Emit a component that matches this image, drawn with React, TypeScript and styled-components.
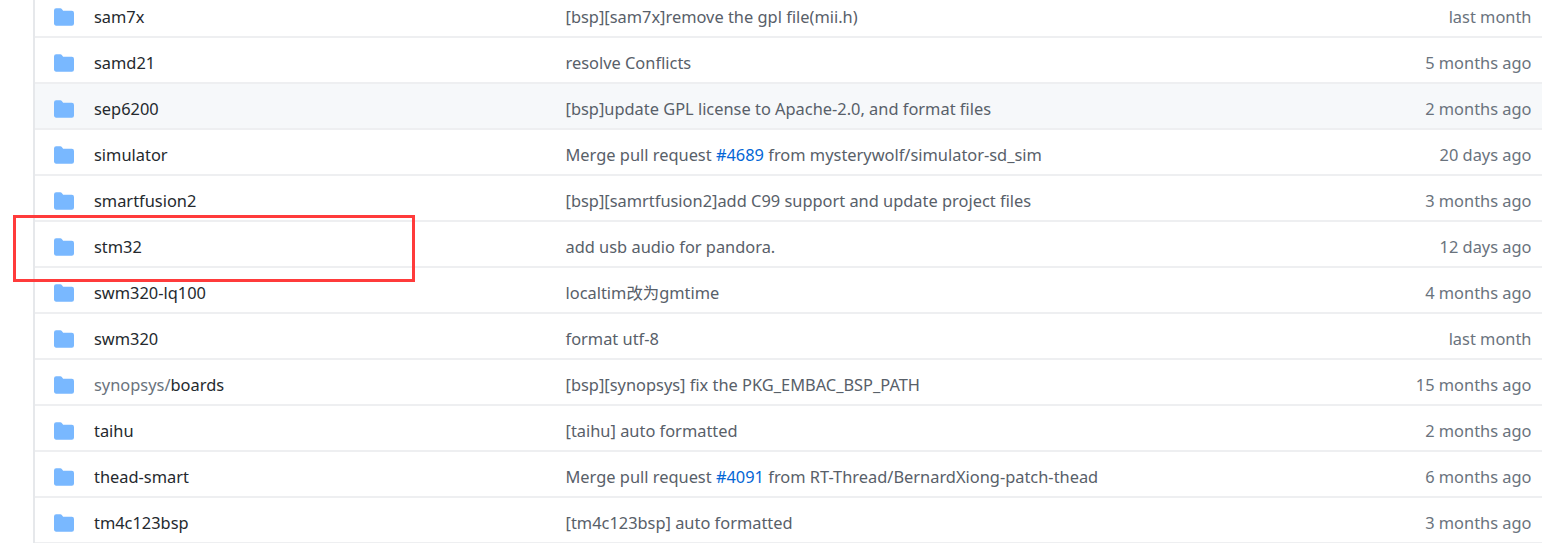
import styled, { createGlobalStyle } from 'styled-components';

interface FileRow {
  name: string;
  prefix?: string;
  message: string;
  issue?: string;
  messageEnd?: string;
  age: string;
  hovered?: boolean;
}

const rows: FileRow[] = [
  { name: 'sam7x', message: '[bsp][sam7x]remove the gpl file(mii.h)', age: 'last month' },
  { name: 'samd21', message: 'resolve Conflicts', age: '5 months ago' },
  { name: 'sep6200', message: '[bsp]update GPL license to Apache-2.0, and format files', age: '2 months ago', hovered: true },
  { name: 'simulator', message: 'Merge pull request ', issue: '#4689', messageEnd: ' from mysterywolf/simulator-sd_sim', age: '20 days ago' },
  { name: 'smartfusion2', message: '[bsp][samrtfusion2]add C99 support and update project files', age: '3 months ago' },
  { name: 'stm32', message: 'add usb audio for pandora.', age: '12 days ago' },
  { name: 'swm320-lq100', message: 'localtim改为gmtime', age: '4 months ago' },
  { name: 'swm320', message: 'format utf-8', age: 'last month' },
  { name: 'boards', prefix: 'synopsys/', message: '[bsp][synopsys] fix the PKG_EMBAC_BSP_PATH', age: '15 months ago' },
  { name: 'taihu', message: '[taihu] auto formatted', age: '2 months ago' },
  { name: 'thead-smart', message: 'Merge pull request ', issue: '#4091', messageEnd: ' from RT-Thread/BernardXiong-patch-thead', age: '6 months ago' },
  { name: 'tm4c123bsp', message: '[tm4c123bsp] auto formatted', age: '3 months ago' },
];

const GlobalStyle = createGlobalStyle`
  html, body {
    margin: 0;
    height: 543px;
    overflow: hidden;
    background: #fff;
  }
`;

const Page = styled.div`
  position: relative;
  height: 543px;
  overflow: hidden;
  padding-left: 33px;
  font-family: 'Noto Sans', 'Noto Sans CJK SC', sans-serif;
  font-size: 16.4px;
  color: #24292e;
`;

const List = styled.div`
  margin-top: -8px;
  border-left: 2px solid #e6e8eb;
`;

const Row = styled.div<{ $hovered?: boolean }>`
  display: grid;
  grid-template-columns: 19px 20px 20px 471.5px 1fr auto;
  align-items: center;
  height: 46px;
  box-sizing: border-box;
  padding: 4px 10.5px 0 0;
  border-bottom: 2px solid #eeeff1;
  background: ${(props) => (props.$hovered ? '#f6f8fa' : '#fff')};
`;

const FolderIcon = styled.svg`
  grid-column: 2;
  width: 20px;
  height: 20px;
  margin-top: 2px;
  fill: #79b8ff;
`;

const Name = styled.span`
  grid-column: 4;
  white-space: nowrap;
`;

const Prefix = styled.span`
  color: #6a737d;
`;

const Message = styled.span`
  grid-column: 5;
  white-space: nowrap;
  color: #586069;
`;

const IssueLink = styled.span`
  color: #0366d6;
`;

const Age = styled.span`
  grid-column: 6;
  text-align: right;
  white-space: nowrap;
  color: #6a737d;
`;

const Highlight = styled.div`
  position: absolute;
  left: 13px;
  top: 215px;
  width: 402px;
  height: 67px;
  box-sizing: border-box;
  border: 3px solid #ff3b3b;
`;

export default function App(): JSX.Element {
  return (
    <Page>
      <GlobalStyle />
      <List>
        {rows.map((row) => (
          <Row key={row.name} $hovered={row.hovered}>
            <FolderIcon viewBox="0 0 16 16">
              <path d="M1.75 1A1.75 1.75 0 000 2.75v10.5C0 14.216.784 15 1.75 15h12.5A1.75 1.75 0 0016 13.25v-8.5A1.75 1.75 0 0014.25 3H7.5a.25.25 0 01-.2-.1l-.9-1.2C6.07 1.26 5.55 1 5 1H1.75z" />
            </FolderIcon>
            <Name>
              {row.prefix && <Prefix>{row.prefix}</Prefix>}
              {row.name}
            </Name>
            <Message>
              {row.message}
              {row.issue && <IssueLink>{row.issue}</IssueLink>}
              {row.messageEnd}
            </Message>
            <Age>{row.age}</Age>
          </Row>
        ))}
      </List>
      <Highlight />
    </Page>
  );
}
